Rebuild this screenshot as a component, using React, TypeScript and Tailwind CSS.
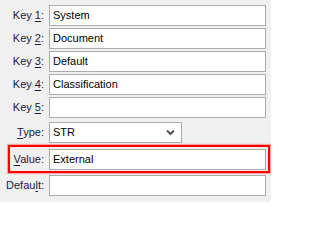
const font = { fontFamily: "'Liberation Sans', Arial, sans-serif" };

type Row = { pre: string; key: string; post: string; value: string };

const keys: Row[] = [
  { pre: "Key ", key: "1", post: ":", value: "System" },
  { pre: "Key ", key: "2", post: ":", value: "Document" },
  { pre: "Key ", key: "3", post: ":", value: "Default" },
  { pre: "Key ", key: "4", post: ":", value: "Classification" },
  { pre: "Key ", key: "5", post: ":", value: "" },
];

function Label({ pre, keyChar, post, width }: { pre: string; keyChar: string; post: string; width: string }) {
  return (
    <div className={`${width} shrink-0 text-right text-[11px] text-[#1a1a3a] pr-[5px]`}>
      {pre}
      <span className="underline underline-offset-2">{keyChar}</span>
      {post}
    </div>
  );
}

function Field({ value }: { value: string }) {
  return (
    <div className="w-[217px] h-[21px] shrink-0 bg-white border border-[#ababab] flex items-center px-[3px] text-[11px] text-black">
      {value}
    </div>
  );
}

export default function App() {
  return (
    <div className="w-[271px] h-[202px] bg-[#f0f0f0] pt-[5px] flex flex-col" style={font}>
      {/* Keys */}
      <div className="flex flex-col gap-[2px]">
        {keys.map((k) => (
          <div key={k.key} className="flex items-center">
            <Label pre={k.pre} keyChar={k.key} post={k.post} width="w-[49px]" />
            <Field value={k.value} />
          </div>
        ))}
      </div>

      {/* Type */}
      <div className="flex items-center mt-[4px]">
        <Label pre="" keyChar="T" post="ype:" width="w-[49px]" />
        <div className="w-[133px] h-[21px] bg-white border border-[#ababab] flex items-center justify-between px-[3px] text-[11px] text-black">
          <span>STR</span>
          <svg width="9" height="7" viewBox="0 0 9 7" className="mr-[3px]">
            <path d="M1 1.5 L4.5 5 L8 1.5" fill="none" stroke="#555" strokeWidth="2" />
          </svg>
        </div>
      </div>

      {/* Value (highlighted) */}
      <div className="mt-[2px] ml-[8px] w-[262px] h-[28px] border-2 border-[#ff0000] shadow-[0_0_1px_1px_rgba(255,80,80,0.45)] flex items-center">
        <Label pre="" keyChar="V" post="alue:" width="w-[39px]" />
        <Field value="External" />
      </div>

      {/* Default */}
      <div className="flex items-center mt-[2px]">
        <Label pre="Defau" keyChar="l" post="t:" width="w-[49px]" />
        <Field value="" />
      </div>
    </div>
  );
}
